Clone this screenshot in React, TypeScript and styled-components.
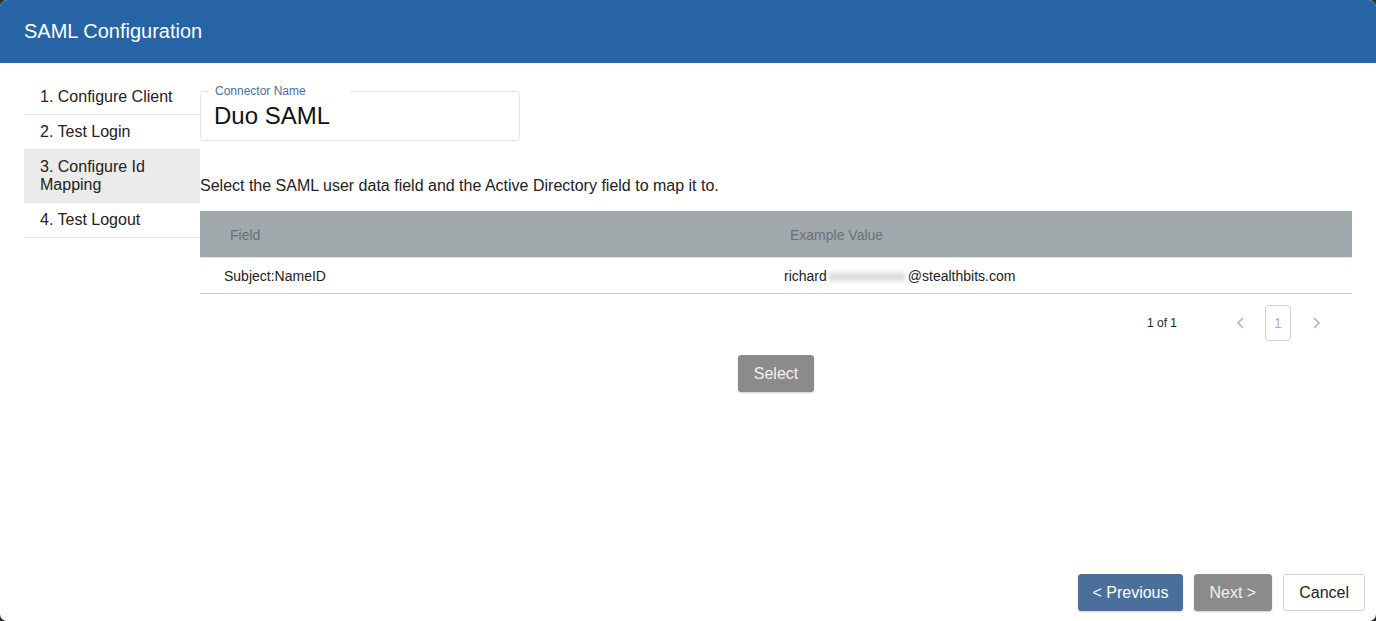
import React from 'react'
import styled, { createGlobalStyle } from 'styled-components'

const steps = [
  { label: '1. Configure Client' },
  { label: '2. Test Login' },
  { label: '3. Configure Id Mapping', active: true },
  { label: '4. Test Logout' },
]

const rows = [{ field: 'Subject:NameID', user: 'richard', hidden: 'xxxxxxxxxxx', domain: '@stealthbits.com' }]

const App = () => {
  return (<>
    <Global />
    <S.Dialog>
      <S.Header>SAML Configuration</S.Header>
      <S.Body>
        <S.Steps>
          {steps.map(step =>
            <S.Step key={step.label} active={!!step.active}>{step.label}</S.Step>
          )}
        </S.Steps>
        <S.Main>
          <S.NameBox>
            <S.NameLabel>Connector Name</S.NameLabel>
            <S.NameValue>Duo SAML</S.NameValue>
          </S.NameBox>
          <S.Hint>Select the SAML user data field and the Active Directory field to map it to.</S.Hint>
          <S.Table>
            <S.HeadCell>Field</S.HeadCell>
            <S.HeadCell>Example Value</S.HeadCell>
            {rows.map(row => <React.Fragment key={row.field}>
              <S.Cell>{row.field}</S.Cell>
              <S.Cell>{row.user}<S.Blurred>{row.hidden}</S.Blurred>{row.domain}</S.Cell>
            </React.Fragment>)}
          </S.Table>
          <S.Pager>
            <S.PageCount>1 of 1</S.PageCount>
            <S.Chevron>
              <svg width='10' height='14' viewBox='0 0 10 14'><path d='M7 2 L2 7 L7 12' fill='none' stroke='#b5b5b5' strokeWidth='1.6' /></svg>
            </S.Chevron>
            <S.PageBox>1</S.PageBox>
            <S.Chevron>
              <svg width='10' height='14' viewBox='0 0 10 14'><path d='M3 2 L8 7 L3 12' fill='none' stroke='#b5b5b5' strokeWidth='1.6' /></svg>
            </S.Chevron>
          </S.Pager>
          <S.Center>
            <S.Button variant='grey'>Select</S.Button>
          </S.Center>
        </S.Main>
      </S.Body>
      <S.Footer>
        <S.Button variant='primary'>&lt; Previous</S.Button>
        <S.Button variant='grey'>Next &gt;</S.Button>
        <S.Button variant='plain'>Cancel</S.Button>
      </S.Footer>
    </S.Dialog>
  </>)
}

export default App

const Global = createGlobalStyle`
  html, body {
    margin: 0;
    padding: 0;
    background: #2b2b2b;
    font-family: "Liberation Sans", Arial, sans-serif;
    color: #222;
  }
`

type Variant = 'primary' | 'grey' | 'plain'

const buttonColors: Record<Variant, { bg: string, fg: string, border: string }> = {
  primary: { bg: '#4a6f9a', fg: '#ffffff', border: '#4a6f9a' },
  grey: { bg: '#8b8b8b', fg: '#f2f2f2', border: '#8b8b8b' },
  plain: { bg: '#ffffff', fg: '#222222', border: '#cfcfcf' },
}

const S = {
  Dialog: styled.div`
    width: 1376px;
    height: 621px;
    background: #fff;
    border-radius: 7px;
    overflow: hidden;
    display: flex;
    flex-direction: column;
  `,
  Header: styled.div`
    height: 63px;
    flex-shrink: 0;
    background: #2664a5;
    color: #fff;
    font-size: 20px;
    display: flex;
    align-items: center;
    padding-left: 24px;
    padding-bottom: 1px;
    box-sizing: border-box;
  `,
  Body: styled.div`
    flex: 1;
    display: flex;
    padding: 17px 24px 0 24px;
  `,
  Steps: styled.div`
    width: 176px;
    flex-shrink: 0;
    display: flex;
    flex-direction: column;
  `,
  Step: styled.div<{ active: boolean }>`
    padding: 8px 16px;
    font-size: 16px;
    line-height: 18px;
    border-bottom: 1px solid #e3e3e3;
    background: ${props => props.active ? '#ebebeb' : '#fff'};
    color: #222;
  `,
  Main: styled.div`
    flex: 1;
    display: flex;
    flex-direction: column;
  `,
  NameBox: styled.div`
    position: relative;
    width: 320px;
    height: 50px;
    box-sizing: border-box;
    margin-top: 11px;
    border: 1px solid #e6e6e6;
    border-radius: 4px;
    display: flex;
    align-items: center;
    padding: 0 14px 0 13px;
  `,
  NameLabel: styled.span`
    position: absolute;
    top: -8px;
    left: 8px;
    width: 135px;
    padding-left: 6px;
    background: #fff;
    font-size: 12px;
    line-height: 14px;
    color: #4b6e9d;
  `,
  NameValue: styled.span`
    font-size: 24px;
    color: #111;
  `,
  Hint: styled.div`
    margin-top: 36px;
    font-size: 16px;
    line-height: 18px;
  `,
  Table: styled.div`
    margin-top: 16px;
    display: grid;
    grid-template-columns: 560px 1fr;
  `,
  HeadCell: styled.div`
    height: 47px;
    background: #a1a9ac;
    color: #697073;
    font-size: 14px;
    display: flex;
    align-items: center;
    padding-left: 30px;
    padding-top: 1px;
    box-sizing: border-box;
    border-bottom: 1px solid #dfe8ea;
  `,
  Cell: styled.div`
    height: 36px;
    box-sizing: border-box;
    padding-left: 24px;
    display: flex;
    align-items: center;
    font-size: 14px;
    color: #222;
    border-bottom: 1px solid #cccccc;
  `,
  Blurred: styled.span`
    color: #999;
    filter: blur(2.5px);
    margin: 0 2px;
  `,
  Pager: styled.div`
    margin-top: 11px;
    display: flex;
    align-items: center;
    justify-content: flex-end;
    padding-right: 24px;
  `,
  PageCount: styled.span`
    font-size: 12px;
    color: #222;
    margin-right: 52px;
  `,
  Chevron: styled.span`
    display: flex;
    width: 24px;
    justify-content: center;
  `,
  PageBox: styled.span`
    width: 26px;
    height: 36px;
    margin: 0 13px 0 12px;
    box-sizing: border-box;
    border: 1px solid #d0d0d0;
    border-radius: 4px;
    display: flex;
    align-items: center;
    justify-content: center;
    font-size: 14px;
    color: #b0b0b0;
  `,
  Center: styled.div`
    margin-top: 14px;
    display: flex;
    justify-content: center;
  `,
  Button: styled.button<{ variant: Variant }>`
    height: 37px;
    padding: 0 ${props => props.variant === 'primary' ? 13 : 15}px;
    font-family: "Liberation Sans", Arial, sans-serif;
    font-size: 16px;
    border-radius: 3px;
    background: ${props => buttonColors[props.variant].bg};
    color: ${props => buttonColors[props.variant].fg};
    border: 1px solid ${props => buttonColors[props.variant].border};
    box-shadow: ${props => props.variant === 'plain' ? 'none' : '0 1px 2px rgba(0,0,0,0.2)'};
  `,
  Footer: styled.div`
    display: flex;
    justify-content: flex-end;
    gap: 11px;
    padding: 0 11px 10px 0;
  `,
}
